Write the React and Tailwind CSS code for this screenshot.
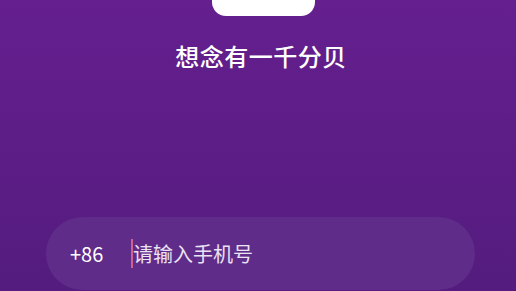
import React, { useState } from 'react';

const App = () => {
  const [phone, setPhone] = useState('');

  return (
    <div
      className="w-[516px] h-[291px] overflow-hidden bg-linear-to-b from-[#651f8f] to-[#541c7e] flex flex-col"
      style={{ fontFamily: '"Noto Sans CJK SC", "Noto Sans", sans-serif' }}
    >
      {/* logo card, top cut off */}
      <div className="ml-[212px] w-[103px] h-[16px] bg-white rounded-b-[14px]" />

      <h1 className="mt-[22px] pl-[6px] text-center text-white text-[24px] leading-[36px] font-medium tracking-[0.5px]">
        想念有一千分贝
      </h1>

      <div className="mt-[143px] ml-[46px] w-[429px] h-[73px] rounded-full bg-[#5f2c8a] flex items-center pl-[24px]">
        <span className="text-[20px] text-white w-[61px]">+86</span>
        <div className="flex items-center">
          <span className="w-[2px] h-[29px] bg-[#d2608c]" />
          <input
            type="text"
            value={phone}
            onChange={(e) => setPhone(e.target.value)}
            placeholder="请输入手机号"
            className="bg-transparent outline-none text-[20px] text-white placeholder:text-[#ebe3f1] w-[300px]"
          />
        </div>
      </div>
    </div>
  );
};

export default App;
